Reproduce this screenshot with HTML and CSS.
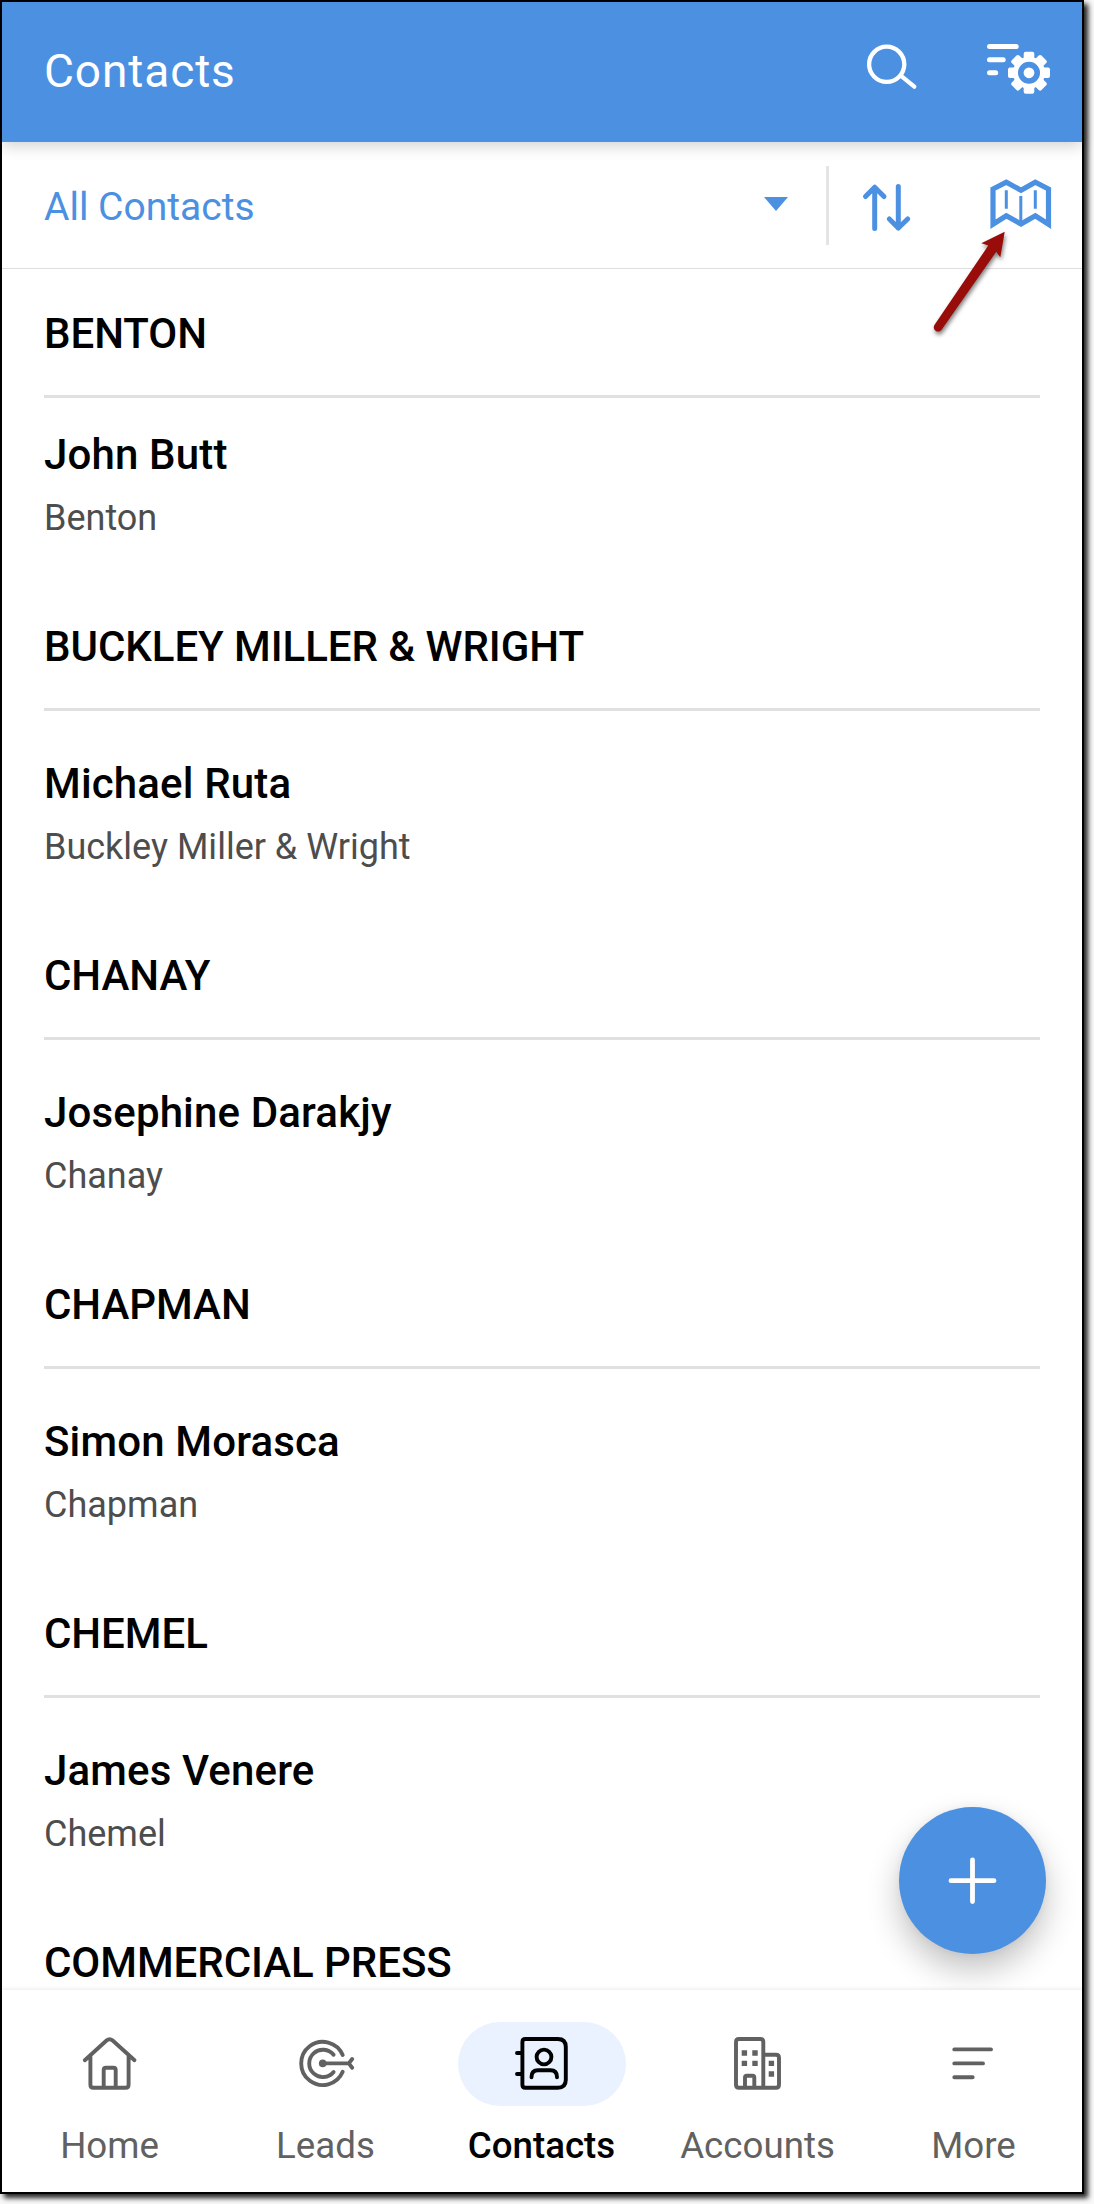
FILE: index.html
```html
<!DOCTYPE html>
<html lang="en">
<head>
    <meta charset="UTF-8">
    <meta name="viewport" content="width=device-width, initial-scale=1.0">
    <title>Contacts</title>
    <link rel="stylesheet" href="styles.css">
</head>
<body>
    <div class="screen">
        <header class="app-bar">
            <h1>Contacts</h1>
            <svg class="icon-search" width="60" height="60" viewBox="0 0 60 60">
                <circle cx="22.7" cy="22.3" r="17.6"/>
                <path d="M38 34.7L50.3 44.7"/>
            </svg>
            <svg class="icon-settings" width="72" height="60" viewBox="0 0 72 60">
                <path class="lines" d="M9.5 4.5H36.2M9.5 17.7H23.2M9.5 30.7H15.7"/>
                <g transform="translate(49 30.8)">
                    <circle r="16"/>
                    <g id="teeth">
                        <rect x="-5.3" y="-21" width="10.6" height="42" rx="2"/>
                        <rect x="-21" y="-5.3" width="42" height="10.6" rx="2"/>
                    </g>
                    <use href="#teeth" transform="rotate(45)"/>
                    <circle class="hole" r="8.2"/>
                </g>
            </svg>
        </header>

        <div class="filter-bar">
            <span class="filter-name">All Contacts</span>
            <span class="caret"></span>
            <span class="separator"></span>
            <svg class="icon-sort" width="60" height="60" viewBox="0 0 60 60">
                <path d="M18.7 53.5V12.5M9.5 21.5L18.7 12.2L28 21.5M42.3 11.5V53M33.3 44L42.3 53L51.7 44"/>
            </svg>
            <svg class="icon-map" width="72" height="60" viewBox="0 0 72 60">
                <path d="M9 14L22.3 7.3L37 15.2L51.3 7.3L64.5 14V49.3L51.3 40.7L37 49L22.3 40.7L9 49.3Z"/>
                <path class="folds" d="M22.3 15.3V33.7M36.8 21V48M51.3 15.3V33.7"/>
            </svg>
        </div>

        <main class="contact-list">
            <section>
                <h2>BENTON</h2>
                <div class="contact">
                    <h3>John Butt</h3>
                    <p>Benton</p>
                </div>
            </section>
            <section>
                <h2>BUCKLEY MILLER &amp; WRIGHT</h2>
                <div class="contact">
                    <h3>Michael Ruta</h3>
                    <p>Buckley Miller &amp; Wright</p>
                </div>
            </section>
            <section>
                <h2>CHANAY</h2>
                <div class="contact">
                    <h3>Josephine Darakjy</h3>
                    <p>Chanay</p>
                </div>
            </section>
            <section>
                <h2>CHAPMAN</h2>
                <div class="contact">
                    <h3>Simon Morasca</h3>
                    <p>Chapman</p>
                </div>
            </section>
            <section>
                <h2>CHEMEL</h2>
                <div class="contact">
                    <h3>James Venere</h3>
                    <p>Chemel</p>
                </div>
            </section>
            <section>
                <h2>COMMERCIAL PRESS</h2>
            </section>

            <button class="add-button" aria-label="Add contact">
                <svg width="60" height="60" viewBox="0 0 60 60">
                    <path d="M8 29.7H51M29.5 9V50.5"/>
                </svg>
            </button>
        </main>

        <nav class="tab-bar">
            <a class="tab">
                <span class="tab-icon">
                    <svg width="60" height="60" viewBox="0 0 60 60">
                        <path d="M4.8 26.3L26.8 6.3Q29.6 4 32.4 6.3L54.5 26.3M10.4 22V50.7Q10.4 53.7 13.4 53.7H45.6Q48.6 53.7 48.6 50.7V22M23.7 53V36Q23.7 33.7 26 33.7H33.4Q35.7 33.7 35.7 36V53"/>
                    </svg>
                </span>
                <span class="tab-label">Home</span>
            </a>
            <a class="tab">
                <span class="tab-icon">
                    <svg width="60" height="60" viewBox="0 0 60 60">
                        <path d="M46.7 21A21.6 21.6 0 1 0 46.7 37.8M37.6 20.8A13.7 13.7 0 1 0 37.6 38M26.7 29.4H52.8M56.2 25L52.8 29.4L56.2 33.8"/>
                        <circle class="solid" cx="26.7" cy="29.4" r="3.8"/>
                    </svg>
                </span>
                <span class="tab-label">Leads</span>
            </a>
            <a class="tab active">
                <span class="tab-icon">
                    <svg width="60" height="60" viewBox="0 0 60 60">
                        <path d="M13.4 5H45.8Q53.8 5 53.8 13V45.7Q53.8 53.7 45.8 53.7H13.4Q10.4 53.7 10.4 50.7V8Q10.4 5 13.4 5ZM5 19H10.4M5 40H10.4"/>
                        <circle cx="32" cy="23" r="7.4"/>
                        <path d="M19.5 43.2Q19.5 36.3 26 36.3H38.5Q45 36.3 45 43.2"/>
                    </svg>
                </span>
                <span class="tab-label">Contacts</span>
            </a>
            <a class="tab">
                <span class="tab-icon">
                    <svg width="60" height="60" viewBox="0 0 60 60">
                        <path d="M11 5H32.3Q35.3 5 35.3 8V53.7H11Q8 53.7 8 50.7V8Q8 5 11 5ZM35.3 20.7H48Q51 20.7 51 23.7V50.7Q51 53.7 48 53.7H35.3M17 53V43.5Q17 41.7 18.8 41.7H24.5Q26.3 41.7 26.3 43.5V53"/>
                        <path class="solid" d="M13.7 16.3h5.4v5.4h-5.4zM24.3 16.3h5.4v5.4h-5.4zM13.7 26.7h5.4v5.4h-5.4zM24.3 26.7h5.4v5.4h-5.4zM40.7 26.7h5.4v5.4h-5.4zM40.7 37.3h5.4v5.4h-5.4z"/>
                    </svg>
                </span>
                <span class="tab-label">Accounts</span>
            </a>
            <a class="tab">
                <span class="tab-icon">
                    <svg width="60" height="60" viewBox="0 0 60 60">
                        <path d="M10.3 15.4H47M10.3 29.4H39M10.3 43.2H28.7"/>
                    </svg>
                </span>
                <span class="tab-label">More</span>
            </a>
        </nav>

        <!-- Pointer to the map view -->
        <svg class="pointer" width="90" height="120" viewBox="0 0 90 120">
            <path d="M79.7 6.7L56.3 18.3L63.3 20.6L9.6 99.7A4.2 4.2 0 0 0 16.6 104.8L71.2 26.8L75.3 32.3Z"/>
        </svg>
    </div>
</body>
</html>
```
FILE: styles.css
```css
* {
    box-sizing: border-box;
}
body {
    margin: 0;
    height: 2204px;
    background-color: #f8f8f8;
    font-family: Roboto, sans-serif;
    overflow: hidden;
}
h1, h2, h3, p {
    margin: 0;
}
svg {
    display: block;
    flex: none;
    fill: none;
    stroke-linecap: round;
    stroke-linejoin: round;
}
.screen {
    position: relative;
    display: flex;
    flex-direction: column;
    width: 1084px;
    height: 2194px;
    border: 2px solid #000;
    background-color: #fff;
    box-shadow: 4px 4px 5px rgba(0, 0, 0, 0.85);
}

/* Top bar */
.app-bar {
    position: relative;
    z-index: 1;
    display: flex;
    align-items: center;
    height: 140px;
    padding: 0 30px 0 42px;
    background-color: #4c90e2;
    color: #fff;
    box-shadow: 0 4px 14px rgba(0, 0, 0, 0.18);
}
.app-bar h1 {
    flex: 1;
    padding-bottom: 2px;
    font-size: 46px;
    font-weight: 400;
    letter-spacing: 0.9px;
}
.icon-search {
    margin-right: 56px;
    stroke: #fff;
    stroke-width: 4.3;
}
.icon-settings {
    fill: #fff;
}
.icon-settings .lines {
    stroke: #fff;
    stroke-width: 5;
}
.icon-settings .hole {
    stroke: #4c90e2;
    stroke-width: 5.6;
}

/* View selector, sort and map */
.filter-bar {
    display: flex;
    align-items: center;
    height: 127px;
    padding: 0 26px 0 42px;
    border-bottom: 1px solid #dedede;
    color: #4c90e2;
}
.filter-name {
    flex: 1;
    padding-top: 3px;
    font-size: 39px;
}
.caret {
    margin: 0 38px 2px 0;
    border: 12px solid transparent;
    border-top: 14px solid #4c90e2;
    border-bottom: 0;
}
.separator {
    width: 3px;
    height: 79px;
    margin-right: 27px;
    background-color: #e4e4e4;
}
.icon-sort {
    margin-right: 68px;
    stroke: #4c90e2;
    stroke-width: 5;
}
.icon-map {
    stroke: #4c90e2;
    stroke-width: 5.2;
    stroke-linejoin: miter;
    stroke-linecap: butt;
}
.icon-map .folds {
    stroke-width: 3;
}

/* Contact list */
.contact-list {
    position: relative;
    height: 1721px;
    padding: 0 42px;
    overflow: hidden;
    color: #000;
}
.contact-list h2 {
    height: 129px;
    padding-top: 3px;
    border-bottom: 3px solid #e0e0e0;
    font-size: 42px;
    font-weight: 500;
    line-height: 123px;
    letter-spacing: -0.05px;
}
.contact {
    padding: 48px 0 43px;
}
section:first-child .contact {
    padding-top: 32px;
}
.contact h3 {
    font-size: 42px;
    font-weight: 500;
    line-height: 49px;
    letter-spacing: 0.15px;
}
.contact p {
    margin-top: 18px;
    color: #4d4d4d;
    font-size: 36px;
    line-height: 42px;
}
.add-button {
    position: absolute;
    right: 36px;
    bottom: 36px;
    display: flex;
    align-items: center;
    justify-content: center;
    width: 147px;
    height: 147px;
    padding: 0;
    border: none;
    border-radius: 50%;
    background-color: #4c90e2;
    box-shadow: 0 16px 32px rgba(0, 0, 0, 0.24), 0 0 8px rgba(0, 0, 0, 0.05);
}
.add-button svg {
    stroke: #fff;
    stroke-width: 4.8;
}

/* Bottom tabs */
.tab-bar {
    position: relative;
    display: flex;
    height: 202px;
    padding-top: 32px;
    background-color: #fff;
    box-shadow: 0 -2px 3px rgba(0, 0, 0, 0.06);
}
.tab {
    flex: 1;
    display: flex;
    flex-direction: column;
    align-items: center;
    color: #616161;
}
.tab-icon {
    display: flex;
    align-items: center;
    justify-content: center;
    width: 168px;
    height: 84px;
    border-radius: 42px;
}
.tab-icon svg {
    stroke: currentColor;
    stroke-width: 3.9;
}
.tab-icon .solid {
    fill: currentColor;
    stroke: none;
}
.tab-label {
    margin: 18px 1px 0 0;
    font-size: 36.7px;
    line-height: 43px;
}
.tab.active {
    color: #000;
}
.tab.active .tab-icon {
    background-color: #eaf2ff;
}
.tab.active .tab-label {
    font-weight: 500;
}

.pointer {
    position: absolute;
    top: 223px;
    left: 923px;
    fill: #980c0a;
    filter: drop-shadow(1px 3px 2px rgba(0, 0, 0, 0.5));
}
```
